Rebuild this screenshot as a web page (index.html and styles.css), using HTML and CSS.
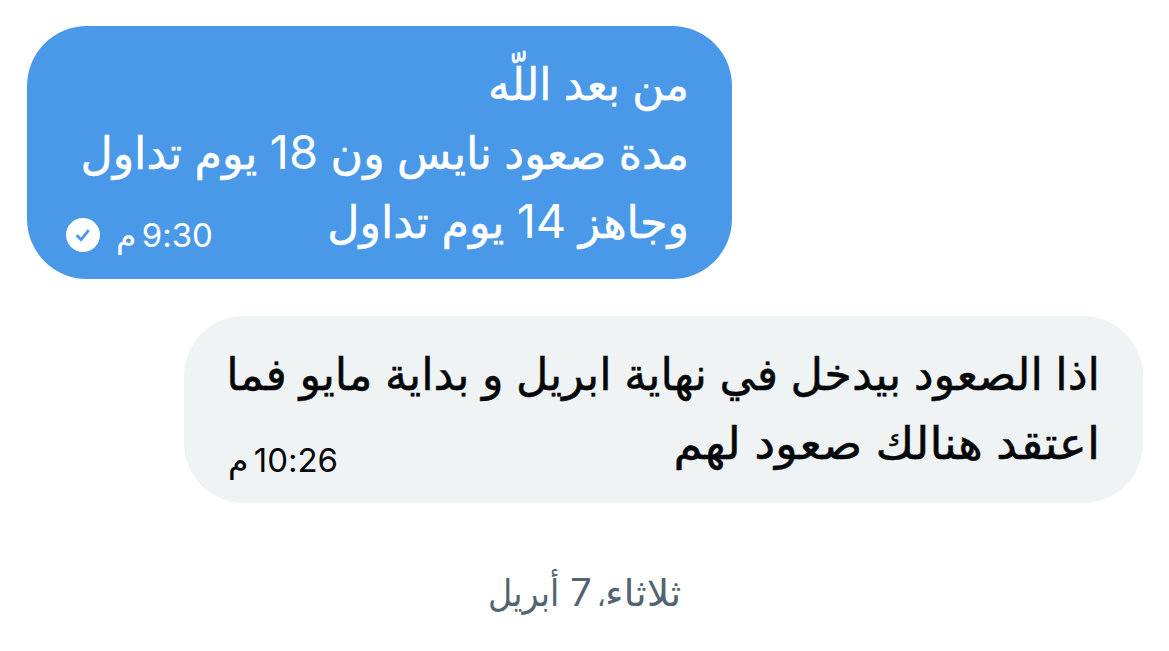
FILE: index.html
```
<!DOCTYPE html>
<html lang="ar" dir="rtl">
<head>
<meta charset="utf-8">
<title>محادثة</title>
<link rel="stylesheet" href="styles.css">
</head>
<body>
<main class="chat">
  <section class="bubble sent">
    <p class="line short">من بعد اللّه</p>
    <p class="line">مدة صعود نايس ون <span class="num">18</span> يوم تداول</p>
    <p class="line">وجاهز <span class="num">14</span> يوم تداول</p>
    <div class="meta"><span class="time"><span class="clock">9:30</span> م</span>
      <svg class="check" viewBox="0 0 34 34"><circle cx="17" cy="17" r="17" fill="#fff"/><path d="M10.7 17.2l4.4 4.4 7.6-9.4" fill="none" stroke="#4a99e9" stroke-width="2.9"/></svg>
    </div>
  </section>
  <section class="bubble received">
    <p class="line">اذا الصعود بيدخل في نهاية ابريل و بداية مايو فما</p>
    <p class="line wide">اعتقد هنالك صعود لهم</p>
    <div class="meta"><span class="time"><span class="clock">10:26</span> م</span></div>
  </section>
  <p class="date"><span class="day">ثلاثاء</span><span class="comma">،</span> <span class="number">7</span> <span class="month">أبريل</span></p>
</main>
</body>
</html>
```
FILE: styles.css
```
* { box-sizing: border-box; }
body { margin: 0; background: #fff; }
p { margin: 0; }
.chat {
  width: 1169px;
  height: 651px;
  padding: 26px 26px 0 27px;
  display: flex;
  flex-direction: column;
  overflow: hidden;
  font-family: Inter, "DejaVu Sans", sans-serif;
}
.bubble {
  position: relative;
  padding: 24px 43px 0;
  border-radius: 60px;
  font-size: 44.6px;
}
.sent {
  align-self: flex-end;
  width: 705px;
  height: 253px;
  background: #4a99e9;
  color: #fff;
}
.sent .line { font-size: 44.4px; }
.received {
  align-self: flex-start;
  width: 959px;
  height: 187px;
  margin-top: 37px;
  background: #eff3f4;
  color: #050708;
}
.line {
  height: 69px;
  line-height: 69px;
  white-space: nowrap;
  -webkit-text-stroke: 0.5px currentColor;
}
.short { transform: scaleX(0.985); transform-origin: right; }
.wide { transform: scaleX(1.056); transform-origin: right; }
.num { font-size: 47px; line-height: 1; letter-spacing: -1.5px; -webkit-text-stroke: 0; }
.meta {
  position: absolute;
  left: 44px;
  bottom: 23px;
  display: flex;
  align-items: center;
  gap: 16px;
  font-size: 33px;
  line-height: 40px;
  white-space: nowrap;
}
.sent .meta { left: 39px; bottom: 24px; }
.time { word-spacing: -4px; }
.clock { font-size: 33px; letter-spacing: -1.8px; }
.check { width: 34px; height: 34px; }
.date {
  margin-top: 63px;
  display: flex;
  justify-content: center;
  align-items: baseline;
  font-size: 37px;
  line-height: 52px;
  color: #536471;
}
.day { transform: scaleX(1.07); transform-origin: right; }
.comma { font-size: 28px; margin-right: 4px; }
.number { font-size: 38px; margin: 0 5px 0 11px; }
.month { transform: scaleX(0.9); transform-origin: right; margin-left: -9px; }
```
